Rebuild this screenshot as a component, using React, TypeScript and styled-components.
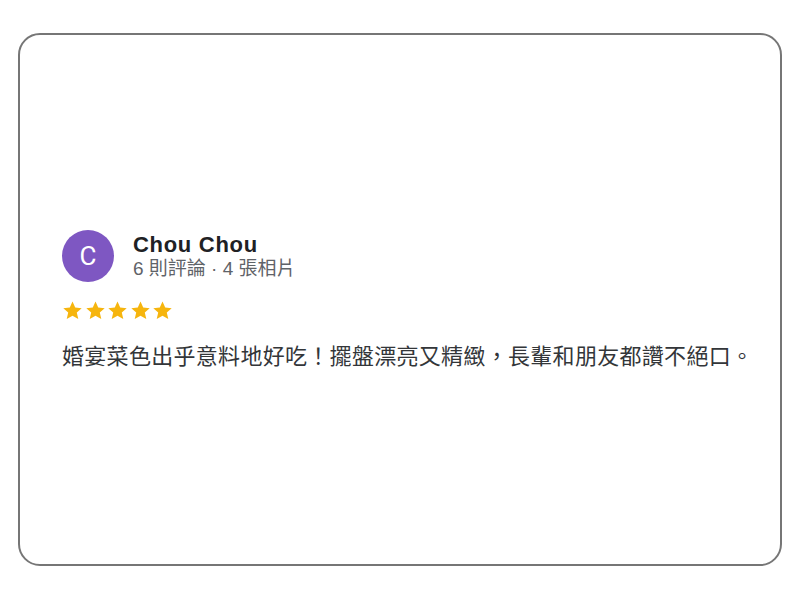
import styled, { createGlobalStyle } from "styled-components";

const GlobalStyle = createGlobalStyle`
  html, body {
    margin: 0;
    padding: 0;
    background: #ffffff;
  }
  body {
    font-family: "Liberation Sans", Arial, "Noto Sans CJK TC", sans-serif;
  }
`;

const Page = styled.div`
  padding: 33px 18px 34px 18px;
`;

const Card = styled.div`
  box-sizing: border-box;
  height: 533px;
  border: 2px solid #767676;
  border-radius: 22px;
  background: #fff;
  padding: 4px 16px 0 42px;
  display: flex;
  flex-direction: column;
  justify-content: center;
`;

const Header = styled.div`
  display: flex;
  align-items: center;
  gap: 19px;
`;

const Avatar = styled.div`
  width: 52px;
  height: 52px;
  border-radius: 50%;
  background: #7e57c2;
  color: #fff;
  display: flex;
  align-items: center;
  justify-content: center;
  font-family: "Roboto", "Liberation Sans", sans-serif;
  font-size: 26px;
  flex-shrink: 0;
`;

const Meta = styled.div`
  display: flex;
  flex-direction: column;
`;

const Name = styled.div`
  font-size: 22px;
  line-height: 26px;
  font-weight: 700;
  color: #202124;
  letter-spacing: 0.7px;
`;

const Sub = styled.div`
  font-size: 19px;
  line-height: 22px;
  color: #5f6368;
`;

const Stars = styled.div`
  display: flex;
  gap: 1.5px;
  margin-top: 18px;
`;

const Body = styled.p`
  margin: 20px 0 0;
  font-size: 22px;
  line-height: 32px;
  letter-spacing: 0.3px;
  white-space: nowrap;
  color: #333639;
  font-family: "Liberation Sans", "Noto Sans CJK TC", sans-serif;
`;

function Star() {
  return (
    <svg width="21" height="21" viewBox="0 0 24 24">
      <path
        fill="#f6b50e"
        d="M12 1.8l3.1 6.9 7.4.7-5.6 5 1.7 7.4L12 17.9l-6.6 3.9 1.7-7.4-5.6-5 7.4-.7z"
      />
    </svg>
  );
}

export default function App() {
  return (
    <>
      <GlobalStyle />
      <Page>
        <Card>
          <Header>
            <Avatar>C</Avatar>
            <Meta>
              <Name>Chou Chou</Name>
              <Sub>6 則評論 · 4 張相片</Sub>
            </Meta>
          </Header>
          <Stars>
            {[0, 1, 2, 3, 4].map((i) => (
              <Star key={i} />
            ))}
          </Stars>
          <Body>婚宴菜色出乎意料地好吃！擺盤漂亮又精緻，長輩和朋友都讚不絕口。</Body>
        </Card>
      </Page>
    </>
  );
}
